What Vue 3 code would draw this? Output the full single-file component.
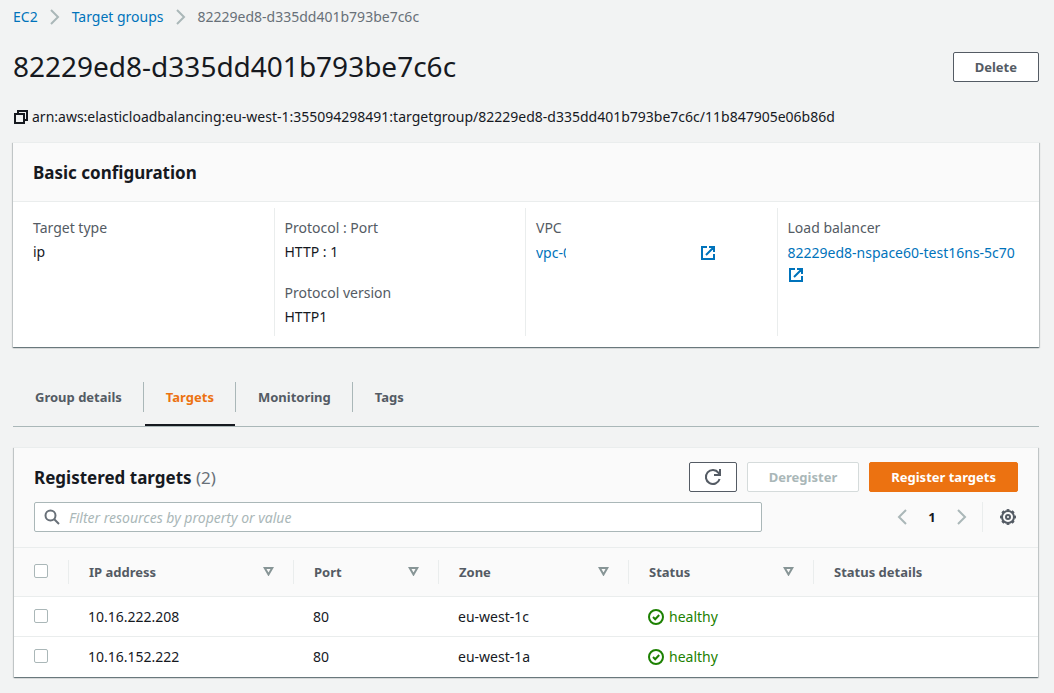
<script setup>
import { ref } from 'vue'

const name = '82229ed8-d335dd401b793be7c6c'
const arn = 'arn:aws:elasticloadbalancing:eu-west-1:355094298491:targetgroup/82229ed8-d335dd401b793be7c6c/11b847905e06b86d'
const tabs = ['Group details', 'Targets', 'Monitoring', 'Tags']
const active = ref('Targets')
const filter = ref('')
const columns = [
  { label: 'IP address', cls: 'c-ip', sort: true },
  { label: 'Port', cls: 'c-port', sort: true },
  { label: 'Zone', cls: 'c-zone', sort: true },
  { label: 'Status', cls: 'c-status', sort: true },
  { label: 'Status details', cls: 'c-details', sort: false },
]
const targets = [
  { ip: '10.16.222.208', port: 80, zone: 'eu-west-1c', status: 'healthy' },
  { ip: '10.16.152.222', port: 80, zone: 'eu-west-1a', status: 'healthy' },
]
</script>

<template>
  <main class="page">
    <nav class="crumbs" aria-label="Breadcrumbs">
      <a href="#">EC2</a>
      <svg class="chev" viewBox="0 0 16 16"><path d="M4 1l7 7-7 7" /></svg>
      <a href="#">Target groups</a>
      <svg class="chev" viewBox="0 0 16 16"><path d="M4 1l7 7-7 7" /></svg>
      <span>{{ name }}</span>
    </nav>

    <header class="title-row">
      <h1>{{ name }}</h1>
      <button class="btn" type="button">Delete</button>
    </header>

    <div class="arn">
      <button class="copy" type="button" aria-label="Copy ARN">
        <svg viewBox="0 0 16 16"><path d="M2 5h9v9H2zM5 5V2h9v9h-3" /></svg>
      </button>
      <span>{{ arn }}</span>
    </div>

    <section class="panel config">
      <h2 class="config-head">Basic configuration</h2>
      <div class="config-grid">
        <dl>
          <dt>Target type</dt>
          <dd>ip</dd>
        </dl>
        <dl>
          <dt>Protocol : Port</dt>
          <dd>HTTP : 1</dd>
          <dt>Protocol version</dt>
          <dd>HTTP1</dd>
        </dl>
        <dl>
          <dt>VPC</dt>
          <dd>
            <a class="vpc" href="#">
              <span class="vpc-id"><span class="vpc-clip">vpc-0</span></span>
              <svg class="ext" viewBox="0 0 16 16"><path d="M7 2H2v12h12V9M9 2h5v5M14 2L6 10" /></svg>
            </a>
          </dd>
        </dl>
        <dl>
          <dt>Load balancer</dt>
          <dd>
            <a class="lb" href="#">82229ed8-nspace60-test16ns-5c70
              <svg class="ext" viewBox="0 0 16 16"><path d="M7 2H2v12h12V9M9 2h5v5M14 2L6 10" /></svg>
            </a>
          </dd>
        </dl>
      </div>
    </section>

    <div class="tabs" role="tablist">
      <div v-for="t in tabs" :key="t" class="tab-cell">
        <button
          type="button" role="tab" class="tab" :class="{ on: t === active }"
          :aria-selected="t === active" @click="active = t"
        >{{ t }}</button>
      </div>
    </div>

    <section class="panel targets">
      <div class="targets-head">
        <div class="bar">
          <h2>Registered targets <span class="count">(2)</span></h2>
          <div class="actions">
            <button class="btn refresh" type="button" aria-label="Refresh">
              <svg viewBox="0 0 18 18"><path d="M15.600 11A7 7 0 1 1 14.500 4.800L16 6.500M16 1v6h-6" /></svg>
            </button>
            <button class="btn" type="button" disabled>Deregister</button>
            <button class="btn primary" type="button">Register targets</button>
          </div>
        </div>
        <div class="bar tools">
          <label class="search">
            <svg viewBox="0 0 16 16"><circle cx="6.500" cy="6.500" r="5" /><path d="M10 10l5 5" /></svg>
            <input v-model="filter" type="text" aria-label="Filter targets" placeholder="Filter resources by property or value">
          </label>
          <div class="pager">
            <button type="button" aria-label="Previous page"><svg viewBox="0 0 16 16"><path d="M12 1L5 8l7 7" /></svg></button>
            <button type="button" class="num">1</button>
            <button type="button" aria-label="Next page"><svg viewBox="0 0 16 16"><path d="M4 1l7 7-7 7" /></svg></button>
            <button type="button" class="gear" aria-label="Preferences">
              <svg viewBox="0 0 16 16">
                <circle cx="8" cy="8" r="6" />
                <circle class="teeth" cx="8" cy="8" r="7" pathLength="16" />
                <circle cx="8" cy="8" r="2" />
              </svg>
            </button>
          </div>
        </div>
      </div>
      <table>
        <thead>
          <tr>
            <th class="c-check"><input type="checkbox" aria-label="Select all targets"></th>
            <th v-for="c in columns" :key="c.label" :class="c.cls" scope="col">
              <div class="th">
                {{ c.label }}
                <svg v-if="c.sort" viewBox="0 0 10 9"><path d="M1.200 1h7.600L5 7.500z" /></svg>
              </div>
            </th>
          </tr>
        </thead>
        <tbody>
          <tr v-for="t in targets" :key="t.ip">
            <td class="c-check"><input type="checkbox" :aria-label="'Select ' + t.ip"></td>
            <td>{{ t.ip }}</td>
            <td>{{ t.port }}</td>
            <td>{{ t.zone }}</td>
            <td>
              <span class="ok">
                <svg viewBox="0 0 16 16"><circle cx="8" cy="8" r="7" /><path d="M5 8l2.200 2.200L11.200 6" /></svg>
                {{ t.status }}
              </span>
            </td>
            <td></td>
          </tr>
        </tbody>
      </table>
    </section>
  </main>
</template>

<style>
body {
  background: #f2f3f3;
}
</style>

<style scoped>
.page {
  box-sizing: border-box;
  padding: 6px 15px 16px 13px;
  font-family: "Noto Sans", "Open Sans", sans-serif;
  font-size: 14px;
  line-height: 22px;
  color: #16191f;
}
*,
*::before {
  box-sizing: border-box;
}
svg {
  display: block;
  fill: none;
  stroke: currentColor;
  stroke-width: 2;
}
button {
  font: inherit;
  color: inherit;
  padding: 0;
  border: 0;
  background: none;
}
a {
  color: #0073bb;
  text-decoration: none;
}
h1,
h2,
dl,
dd {
  margin: 0;
}
.crumbs {
  display: flex;
  align-items: center;
  gap: 9px;
  color: #687078;
}
.chev {
  width: 16px;
  height: 16px;
  color: #aab7b8;
}
.title-row {
  display: flex;
  justify-content: space-between;
  align-items: center;
  margin-top: 18px;
}
h1 {
  font-size: 28px;
  line-height: 40px;
  padding-bottom: 2px;
  font-weight: 400;
}
.btn {
  height: 30px;
  padding: 0 20px;
  border: 1px solid #545b64;
  border-radius: 2px;
  background: #fff;
  color: #545b64;
  font-size: 13px;
  font-weight: 700;
}
.title-row .btn,
.actions .btn {
  padding: 0 21px;
}
.btn:disabled {
  border-color: #d5dbdb;
  color: #aab7b8;
}
.btn.primary {
  border-color: #ec7211;
  background: #ec7211;
  color: #fff;
}
.actions .refresh {
  width: 48px;
  padding: 0 14px;
}
.refresh svg {
  width: 18px;
  height: 18px;
}
.arn {
  display: flex;
  align-items: center;
  gap: 3px;
  margin-top: 18px;
}
.copy svg {
  width: 16px;
  height: 16px;
}
.panel {
  background: #fff;
  border-top: 1px solid #eaeded;
  box-shadow: 0 1px 1px 0 rgba(0, 28, 36, 0.4), 1px 1px 1px 0 rgba(0, 28, 36, 0.15), -1px 1px 1px 0 rgba(0, 28, 36, 0.15);
}
.config {
  margin-top: 14px;
}
h2 {
  font-size: 17px;
  line-height: 22px;
  font-weight: 700;
}
.config-head {
  padding: 19px 20px 17px;
  background: #fafafa;
  border-bottom: 1px solid #eaeded;
}
.config-grid {
  display: grid;
  grid-template-columns: repeat(4, 1fr);
  padding: 6px 11px 11px 9px;
}
dl {
  min-width: 0;
  padding: 9px 0 8px 11px;
}
dl + dl {
  padding-left: 10px;
  border-left: 1px solid #eaeded;
}
dt {
  color: #545b64;
}
dd {
  margin-top: 2px;
}
dd + dt {
  margin-top: 19px;
}
.vpc,
.lb {
  display: block;
  padding-top: 1px;
}
.vpc {
  display: flex;
  align-items: center;
}
.vpc-id {
  width: 164px;
}
.vpc-clip {
  display: block;
  width: 30px;
  overflow: hidden;
  white-space: nowrap;
}
.ext {
  width: 16px;
  height: 16px;
}
.lb .ext {
  margin-top: 3px;
}
.tabs {
  display: flex;
  margin-top: 35px;
  border-bottom: 1px solid #aab7b8;
}
.tab-cell {
  display: flex;
  align-items: flex-start;
}
.tab-cell + .tab-cell::before {
  content: "";
  width: 1px;
  height: 30px;
  background: #aab7b8;
}
.tab {
  height: 44px;
  padding: 0 21px 12px;
  border-bottom: 2px solid transparent;
  margin-left: 1px;
  color: #545b64;
  font-size: 13px;
  font-weight: 700;
}
.tab.on {
  color: #ec7211;
  border-bottom-color: #16191f;
}
.targets {
  margin: 20px 1px 0;
  padding-bottom: 1px;
}
.targets-head {
  padding: 14px 20px 15px;
  background: #fafafa;
  border-bottom: 1px solid #eaeded;
}
.bar {
  display: flex;
  align-items: center;
  justify-content: space-between;
}
.bar h2 {
  padding-top: 2px;
}
.count {
  color: #687078;
  font-weight: 400;
}
.actions {
  display: flex;
  gap: 10px;
}
.tools {
  margin-top: 10px;
}
.search {
  display: flex;
  align-items: center;
  gap: 9px;
  flex: 0 0 74%;
  height: 30px;
  padding: 0 9px;
  border: 1px solid #aab7b8;
  border-radius: 2px;
  background: #fff;
  color: #687078;
}
.search svg {
  width: 16px;
  height: 16px;
}
.search input {
  flex: 1;
  min-width: 0;
  padding: 2px 0 0;
  border: 0;
  outline: 0;
  background: none;
  font: inherit;
}
.search input::placeholder {
  color: #aab7b8;
  font-style: italic;
}
.pager {
  display: flex;
  align-items: center;
  color: #aab7b8;
}
.pager svg {
  width: 16px;
  height: 16px;
}
.num {
  width: 44px;
  color: #16191f;
  font-size: 13px;
  font-weight: 700;
}
.gear {
  height: 30px;
  margin-left: 12px;
  padding: 0 2px 0 17px;
  border-left: 1px solid #eaeded;
  color: #545b64;
}
.teeth {
  stroke-dasharray: 1 1;
  stroke-dashoffset: 0.5;
}
table {
  width: 100%;
  table-layout: fixed;
  border-collapse: collapse;
}
th {
  height: 48px;
  padding: 0;
  background: #fafafa;
  color: #545b64;
  font-size: 13px;
  text-align: left;
}
td {
  height: 40px;
  padding: 2px 20px 0;
  border-top: 1px solid #eaeded;
}
th.c-check {
  width: 54px;
  padding: 0 0 2px 20px;
}
td.c-check {
  padding: 0 0 0 20px;
}
.c-ip {
  width: 225px;
}
.c-port {
  width: 145px;
}
.c-zone {
  width: 190px;
}
.c-status {
  width: 185px;
}
.th {
  display: flex;
  align-items: center;
  justify-content: space-between;
  height: 24px;
  padding: 0 19px 0 20px;
  border-left: 1px solid #eaeded;
}
.th svg {
  width: 11px;
  height: 9px;
  color: #879596;
}
input[type="checkbox"] {
  appearance: none;
  display: block;
  width: 14px;
  height: 14px;
  margin: 0;
  border: 1px solid #aab7b8;
  border-radius: 2px;
  background: #fff;
}
.ok {
  display: flex;
  align-items: center;
  gap: 5px;
  color: #1d8102;
}
.ok svg {
  width: 16px;
  height: 16px;
}
</style>
